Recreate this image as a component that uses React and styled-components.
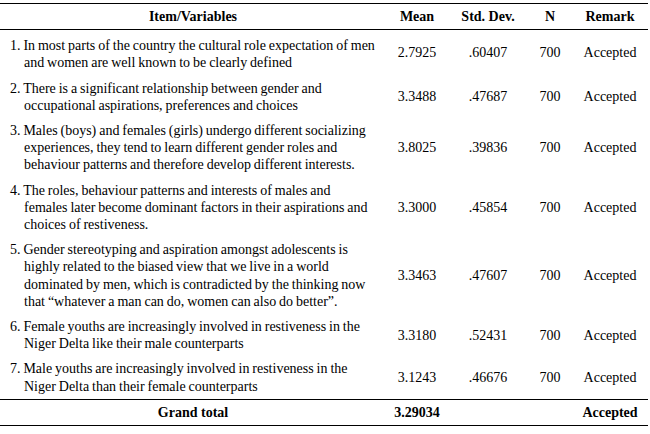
import React from 'react';
import styled, { createGlobalStyle } from 'styled-components';

const GlobalStyle = createGlobalStyle`
	html, body {
		margin: 0;
		padding: 0;
		background: #fff;
	}
	body {
		font-family: 'Liberation Serif', 'Times New Roman', serif;
		color: #000;
	}
`;

const Page = styled.div`
	padding-top: 3px;
`;

const Table = styled.table`
	width: 648px;
	border-collapse: collapse;
	table-layout: fixed;
	font-size: 14px;
	line-height: 17.2px;
`;

const HeadRow = styled.tr`
	border-top: 1px solid #000;
	border-bottom: 1px solid #000;
`;

const HeadCell = styled.th`
	font-weight: bold;
	text-align: center;
	padding: 4px 0;
	white-space: nowrap;
`;

const ItemCell = styled.td`
	padding: ${props => (props.first ? '7px' : '4px')} 0 4px 24px;
	text-indent: -14px;
	white-space: nowrap;
	word-spacing: -0.6px;
	vertical-align: middle;
`;

const NumCell = styled.td`
	text-align: center;
	vertical-align: middle;
	white-space: nowrap;
	padding: 0;
`;

const TotalRow = styled.tr`
	border-top: 1px solid #000;
	border-bottom: 1px solid #000;
`;

const TotalCell = styled.td`
	font-weight: bold;
	text-align: center;
	padding: 4px 0;
	white-space: nowrap;
`;

const items = [
	{
		lines: [
			'1. In most parts of the country the cultural role expectation of men',
			'and women are well known to be clearly defined'
		],
		mean: '2.7925',
		sd: '.60407'
	},
	{
		lines: [
			'2. There is a significant relationship between gender and',
			'occupational aspirations, preferences and choices'
		],
		mean: '3.3488',
		sd: '.47687'
	},
	{
		lines: [
			'3. Males (boys) and females (girls) undergo different socializing',
			'experiences, they tend to learn different gender roles and',
			'behaviour patterns and therefore develop different interests.'
		],
		mean: '3.8025',
		sd: '.39836'
	},
	{
		lines: [
			'4. The roles, behaviour patterns and interests of males and',
			'females later become dominant factors in their aspirations and',
			'choices of restiveness.'
		],
		mean: '3.3000',
		sd: '.45854'
	},
	{
		lines: [
			'5. Gender stereotyping and aspiration amongst adolescents is',
			'highly related to the biased view that we live in a world',
			'dominated by men, which is contradicted by the thinking now',
			'that \u201cwhatever a man can do, women can also do better\u201d.'
		],
		mean: '3.3463',
		sd: '.47607'
	},
	{
		lines: [
			'6. Female youths are increasingly involved in restiveness in the',
			'Niger Delta like their male counterparts'
		],
		mean: '3.3180',
		sd: '.52431'
	},
	{
		lines: [
			'7. Male youths are increasingly involved in restiveness in the',
			'Niger Delta than their female counterparts'
		],
		mean: '3.1243',
		sd: '.46676'
	}
];

const App = () => {
	return (
		<Page>
			<GlobalStyle />
			<Table>
				<colgroup>
					<col style={{ width: 386 }} />
					<col style={{ width: 62 }} />
					<col style={{ width: 80 }} />
					<col style={{ width: 44 }} />
					<col style={{ width: 76 }} />
				</colgroup>
				<thead>
					<HeadRow>
						<HeadCell>Item/Variables</HeadCell>
						<HeadCell>Mean</HeadCell>
						<HeadCell>Std. Dev.</HeadCell>
						<HeadCell>N</HeadCell>
						<HeadCell>Remark</HeadCell>
					</HeadRow>
				</thead>
				<tbody>
					{items.map((item, i) => (
						<tr key={i}>
							<ItemCell first={i === 0}>
								{item.lines.map((line, j) => (
									<React.Fragment key={j}>
										{j > 0 && <br />}
										{line}
									</React.Fragment>
								))}
							</ItemCell>
							<NumCell>{item.mean}</NumCell>
							<NumCell>{item.sd}</NumCell>
							<NumCell>700</NumCell>
							<NumCell>Accepted</NumCell>
						</tr>
					))}
					<TotalRow>
						<TotalCell>Grand total</TotalCell>
						<TotalCell>3.29034</TotalCell>
						<TotalCell />
						<TotalCell />
						<TotalCell>Accepted</TotalCell>
					</TotalRow>
				</tbody>
			</Table>
		</Page>
	);
};

export default App;
